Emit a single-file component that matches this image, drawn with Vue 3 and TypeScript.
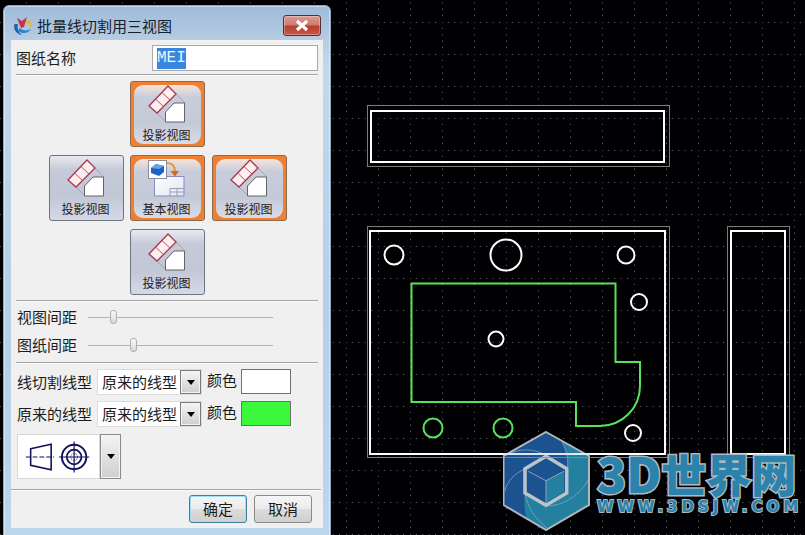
<script setup lang="ts">
interface ViewBtn { col: number; row: number; label: string; active: boolean; base?: boolean }
const buttons: ViewBtn[] = [
  { col: 2, row: 1, label: '投影视图', active: true },
  { col: 1, row: 2, label: '投影视图', active: false },
  { col: 2, row: 2, label: '基本视图', active: true, base: true },
  { col: 3, row: 2, label: '投影视图', active: true },
  { col: 2, row: 3, label: '投影视图', active: false },
]
const sliders = [
  { label: '视图间距', pos: 22 },
  { label: '图纸间距', pos: 42 },
]
const lineRows = [
  { label: '线切割线型', color: '#ffffff' },
  { label: '原来的线型', color: '#3cf83c' },
]
const whiteCircles = [
  [394, 255, 9.5], [506, 255, 15.5], [626, 255, 8.5], [639, 302, 8],
  [496, 339, 7.5], [633, 433, 8],
]
const greenCircles = [[433, 428, 9.5], [503, 428, 9.5]]
</script>

<template>
  <div class="desktop">
    <svg class="cad" width="805" height="535" viewBox="0 0 805 535">
      <defs>
        <pattern id="grid" x="26" y="22" width="32" height="32" patternUnits="userSpaceOnUse">
          <g fill="#5e646c">
            <circle v-for="i in 5" :key="'h' + i" :cx="(i - 1) * 6.4" cy="0.5" r="0.6" />
            <circle v-for="i in 5" :key="'v' + i" cx="0.5" :cy="(i - 1) * 6.4" r="0.6" />
          </g>
        </pattern>
      </defs>
      <rect width="805" height="535" fill="#010103" />
      <rect width="805" height="535" fill="url(#grid)" />
      <g fill="none" stroke="#7c7c7c" stroke-width="1">
        <rect x="367.5" y="105.5" width="302" height="61" />
        <rect x="367.5" y="226.5" width="302" height="231" />
        <rect x="727.5" y="226.5" width="62" height="231" />
      </g>
      <g fill="none" stroke="#fff" stroke-width="2">
        <rect x="371" y="111" width="293" height="51" />
        <rect x="370" y="231" width="295" height="223" />
        <rect x="731" y="231" width="54" height="223" />
        <circle v-for="(c, i) in whiteCircles" :key="i" :cx="c[0]" :cy="c[1]" :r="c[2]" />
      </g>
      <g fill="none" stroke="#58e25c" stroke-width="2">
        <path d="M411.5 283.5H615.5V362H640V386A40 40 0 0 1 600 426H576V402H411.5Z" />
        <circle v-for="(c, i) in greenCircles" :key="i" :cx="c[0]" :cy="c[1]" :r="c[2]" />
      </g>
    </svg>

    <div class="logo">
      <svg class="logo-mark" width="90" height="100" viewBox="0 0 90 100">
        <path d="M43 1 86 25V74L43 99 0.500 74V25Z" fill="#1c528f" />
        <path d="M58.700 10 86 25V74L43 99 24 88C21 80 21 70 22 62L43 74 64 62V38C66 28 63 18 58.700 10Z" fill="#23809f" />
        <g fill="none" stroke="#7fa6c0" stroke-width="0.800">
          <path d="M3.700 24C16 17 32 17 43.700 25" />
          <path d="M2 60C4 50 12 42 22 38" />
          <path d="M86 47C78 64 60 75 43.700 75" />
          <path d="M22 62C24 74 30 86 44 97" />
          <path d="M58.700 10C64 20 66 30 64 40" />
        </g>
        <path d="M43 1 86 25V74L43 99 0.500 74V25Z" fill="none" stroke="#b0b8be" stroke-width="2" />
        <path d="M43 25.300 63.700 37.700V62L43 74.300 22 62V37.700Z" fill="#1c528f" stroke="#bcc4ca" stroke-width="3.500" />
        <path d="M43 49.700V72L61 61V40.300Z" fill="#23809f" />
        <path d="M43 49.700 25.300 40.300M43 49.700V72M43 49.700 60.700 40.300" fill="none" stroke="#a8b8c4" stroke-width="0.800" />
        <path d="M0 23H87" stroke="#dfe8f2" stroke-width="2" />
        <path d="M0 26.500H87" stroke="#8a8f96" stroke-width="0.800" />
      </svg>
      <div class="logo-text">
        <div class="logo-title"><span class="logo-3d">3D</span>世界网</div>
        <div class="logo-url">WWW.3DSJW.COM</div>
      </div>
    </div>

    <section class="window">
      <header class="titlebar">
        <svg class="app-icon" width="20" height="20" viewBox="0 0 20 20">
          <path d="M1.500 8C0 13 3 18 9 19 5 16 4 12 5 8Z" fill="#1f62b0" />
          <path d="M5 15C9 18 15 18 18 13 14 15 10 15 6.500 12Z" fill="#2a86c8" />
          <path d="M4 2 9 5 14 1 11 11 8 12Z" fill="#c8324a" />
          <path d="M14 4C18 4 20 8 18 12 17 9 15 7 13 7Z" fill="#d8bc3a" />
        </svg>
        <span class="title-text">批量线切割用三视图</span>
        <button class="close">
          <svg width="16" height="13" viewBox="0 0 16 13">
            <path d="M3 2 13 11M13 2 3 11" stroke="#fff" stroke-width="3.200" fill="none" />
          </svg>
        </button>
      </header>

      <div class="client">
        <div class="name-row">
          <span class="label">图纸名称</span>
          <div class="name-input"><span class="selected">MEI</span></div>
        </div>
        <div class="sep"></div>

        <div class="view-grid">
          <button
            v-for="(b, i) in buttons"
            :key="i"
            class="view-btn"
            :class="{ active: b.active }"
            :style="{ gridColumn: b.col, gridRow: b.row }"
          >
            <svg class="view-icon" width="73" height="44" viewBox="1 1 73 44">
              <template v-if="b.base">
                <defs>
                  <linearGradient id="sheet" x1="0" y1="0" x2="1" y2="1">
                    <stop offset="0" stop-color="#fff" />
                    <stop offset="1" stop-color="#dfe5f4" />
                  </linearGradient>
                </defs>
                <path d="M24.500 21.500H54V41H24.500Z" fill="url(#sheet)" stroke="#7f8fc4" />
                <path d="M40 33.500H54M40 37H54M40 33.500V41M47 33.500V41" stroke="#9a9fb0" fill="none" />
                <path d="M37 8C42 8 45 11 45 17" stroke="#d8a040" stroke-width="2.200" fill="none" />
                <path d="M40.500 16H49L45 21.500Z" fill="#e0641a" />
                <rect x="18.500" y="5.500" width="18" height="18" fill="#fff" stroke="#8a8fa0" />
                <path d="M21 13 26 9 34 11V17L29 21 21 18Z" fill="#1f5fc8" />
                <path d="M26 9 34 11 29 14 21 13Z" fill="#62a6ee" />
              </template>
              <template v-else>
                <path d="M46 13 55 22M27 32 36 41" stroke="#a9a3ad" fill="none" />
                <path d="M19 25 38 5 46 13 27 32Z" fill="#fdeef0" stroke="#a8384e" stroke-width="1.300" />
                <path d="M25.500 18 33.500 25.500M32 11.500 40 19" stroke="#b85468" fill="none" />
                <path d="M35.500 41V31L44 22H54.500V41Z" fill="#fff" stroke="#62646a" />
              </template>
            </svg>
            <span class="view-label">{{ b.label }}</span>
          </button>
        </div>
        <div class="sep sep-views"></div>

        <div class="sliders">
          <div v-for="s in sliders" :key="s.label" class="slider-row">
            <span class="label slider-label">{{ s.label }}</span>
            <div class="track">
              <span class="thumb" :style="{ left: s.pos + 'px' }"></span>
            </div>
          </div>
        </div>
        <div class="sep sep-sliders"></div>

        <div class="line-rows">
          <div v-for="r in lineRows" :key="r.label" class="line-row">
            <span class="label line-label">{{ r.label }}</span>
            <div class="combo">
              <span class="combo-text">原来的线型</span>
              <span class="drop"><i class="tri"></i></span>
            </div>
            <span class="label color-label">颜色</span>
            <span class="swatch" :style="{ background: r.color }"></span>
          </div>
        </div>

        <div class="symbol-combo">
          <div class="symbol-box">
            <svg width="84" height="44" viewBox="0 0 84 44">
              <g fill="none" stroke="#10105c" stroke-width="1.600">
                <path d="M14 13.500 35 9V35L14 30.500Z" />
                <path d="M9 22H38" stroke-width="1.200" stroke-dasharray="5 2" />
                <circle cx="58.500" cy="22" r="12.500" stroke-width="2" />
                <circle cx="58.500" cy="22" r="7.500" stroke-width="1.800" />
                <circle cx="58.500" cy="22" r="3.500" stroke-width="0.800" stroke-dasharray="1.500 1" />
                <path d="M43 22H74M58.500 6V38" stroke-width="1.200" />
              </g>
            </svg>
          </div>
          <span class="drop drop-tall"><i class="tri"></i></span>
        </div>

        <div class="sep sep-footer"></div>
        <footer class="footer">
          <button class="act primary">确定</button>
          <button class="act">取消</button>
        </footer>
      </div>
    </section>
  </div>
</template>

<style scoped>
.desktop {
  position: relative;
  width: 805px;
  height: 535px;
  overflow: hidden;
  background: #010103;
  font-family: "Noto Sans CJK SC", "Liberation Sans", sans-serif;
}
.cad { position: absolute; left: 0; top: 0; display: block; }

.logo {
  position: absolute;
  left: 503px;
  top: 431px;
  display: flex;
  gap: 4px;
}
.logo-mark { display: block; flex: none; }
.logo-text { margin-top: 16px; width: 205px; }
.logo-title {
  color: #2b83ab;
  font-size: 45px;
  line-height: 50px;
  font-weight: 900;
  white-space: nowrap;
  -webkit-text-stroke: 3px #a9bac6;
  paint-order: stroke fill;
}
.logo-3d { font-size: 48px; }
.logo-url {
  margin-top: 1px;
  color: #2b83ab;
  font-family: "DejaVu Sans", sans-serif;
  font-size: 15px;
  line-height: 15px;
  font-weight: 700;
  letter-spacing: 4px;
  white-space: nowrap;
  -webkit-text-stroke: 2px #a9bac6;
  paint-order: stroke fill;
}

.window {
  position: absolute;
  left: 3px;
  top: 5px;
  width: 328px;
  height: 535px;
  box-sizing: border-box;
  border: 1px solid #8ea8c2;
  border-radius: 6px 6px 0 0;
  background: linear-gradient(180deg, #9fbbd9 0, #b3cae0 30px, #c2d8ea 60px, #b4cfe6 300px, #bcd6ec 100%);
  box-shadow: inset 0 0 0 1px rgba(255, 255, 255, 0.4);
}
.titlebar {
  display: flex;
  align-items: center;
  height: 34px;
  padding: 5px 9px 0 9px;
  box-sizing: border-box;
}
.app-icon { flex: none; }
.title-text {
  margin-left: 4px;
  font-size: 15px;
  line-height: 20px;
  color: #14202c;
}
.close {
  margin-left: auto;
  width: 38px;
  height: 21px;
  padding: 0;
  display: flex;
  align-items: center;
  justify-content: center;
  border: 1px solid #55302e;
  border-radius: 3px;
  background: linear-gradient(180deg, #dc9a90 0, #d07c70 45%, #b8402e 55%, #c8574a 100%);
  box-shadow: inset 0 0 0 1px rgba(255, 255, 255, 0.3);
}

.client {
  margin: 0 7px;
  height: 488px;
  padding: 5px 5px 0;
  box-sizing: border-box;
  background: #f0f0f0;
}
.label {
  font-size: 15px;
  line-height: 20px;
  color: #1c1c1c;
  white-space: nowrap;
}
.name-row {
  display: flex;
  align-items: center;
  justify-content: space-between;
  height: 26px;
}
.name-input {
  width: 166px;
  height: 26px;
  box-sizing: border-box;
  display: flex;
  align-items: center;
  padding-left: 4px;
  background: #fff;
  border: 1px solid #a9a9a9;
}
.selected {
  background: #3a86dc;
  color: #e8f4ff;
  font-family: "Liberation Mono", monospace;
  font-size: 16px;
  line-height: 21px;
}
.sep { height: 1px; background: #a6a6a6; margin-top: 3px; box-shadow: 0 1px 0 #fbfbfb; }

.view-grid {
  display: grid;
  grid-template-columns: 81px 82px 75px;
  grid-template-rows: repeat(3, 66px);
  row-gap: 8px;
  margin: 6px 0 0 33px;
}
.view-btn {
  position: relative;
  width: 75px;
  height: 66px;
  box-sizing: border-box;
  padding: 0;
  display: flex;
  flex-direction: column;
  align-items: center;
  border: 1px solid #70747f;
  border-radius: 3px;
  background: linear-gradient(180deg, #e8eaf0 0, #c6cad8 14px, #c2c7d6 40px, #d5d9e7 100%);
  font-family: inherit;
}
.view-btn.active {
  border-color: #8c6a50;
  background: #f08030;
}
.view-btn.active::before {
  content: "";
  position: absolute;
  inset: 3px 3px 2px;
  border-radius: 9px;
  background: linear-gradient(180deg, #f6e4da 0, #c9cddb 12px, #c4c9d8 38px, #d8dce9 100%);
}
.view-icon { display: block; flex: none; position: relative; }
.view-label {
  position: relative;
  margin: 1px 0 0 -2px;
  font-size: 12px;
  line-height: 16px;
  color: #222;
}

.sep-views { margin-top: 5px; }
.sliders { margin-top: 2px; }
.slider-row { display: flex; align-items: center; height: 28px; padding-left: 1px; }
.slider-label { width: 71px; flex: none; }
.track {
  position: relative;
  width: 185px;
  height: 1px;
  background: #b4b4b4;
}
.thumb {
  position: absolute;
  top: -7px;
  width: 7px;
  height: 14px;
  box-sizing: border-box;
  border: 1px solid #b0b0b0;
  border-radius: 3px;
  background: linear-gradient(180deg, #fafafa, #d6d6d6);
}
.sep-sliders { margin-top: 3px; }

.line-rows { margin-top: 6px; display: flex; flex-direction: column; gap: 6px; }
.line-row { display: flex; align-items: center; height: 26px; padding-left: 1px; }
.line-label { width: 80px; flex: none; }
.combo {
  width: 105px;
  height: 26px;
  box-sizing: border-box;
  display: flex;
  background: #fff;
  border: 1px solid #dcdcdc;
  flex: none;
}
.combo-text { flex: 1; padding-left: 4px; font-size: 15px; line-height: 24px; color: #1c1c1c; white-space: nowrap; }
.drop {
  width: 21px;
  flex: none;
  box-sizing: border-box;
  display: flex;
  align-items: center;
  justify-content: center;
  border: 1px solid #7c7c7c;
  background: linear-gradient(180deg, #f4f4f4, #cfcfcf);
  box-shadow: inset 0 0 0 1px #f4f4f4;
}
.tri {
  width: 0;
  height: 0;
  border-left: 4.5px solid transparent;
  border-right: 4.5px solid transparent;
  border-top: 5px solid #000;
}
.color-label { margin-left: 5px; width: 34px; flex: none; margin-top: -4px; }
.swatch {
  width: 50px;
  height: 25px;
  box-sizing: border-box;
  border: 1px solid #707070;
  flex: none;
  margin-top: -2px;
}

.symbol-combo { display: flex; height: 45px; width: 104px; margin: 7px 0 0 1px; }
.symbol-box {
  width: 83px;
  box-sizing: border-box;
  background: #fff;
  border: 1px solid #d8d8d8;
  display: flex;
  align-items: center;
}
.symbol-box svg { display: block; margin-left: -1px; }
.drop-tall { border-color: #8a8a8a; }

.sep-footer { margin: 10px -3px 0 -5px; }
.footer { display: flex; justify-content: flex-end; gap: 7px; margin-top: 5px; padding-right: 6px; }
.act {
  width: 58px;
  height: 28px;
  box-sizing: border-box;
  padding: 0;
  border: 1px solid #8a8a8a;
  border-radius: 3px;
  background: linear-gradient(180deg, #f6f6f6, #ebebeb 48%, #dcdcdc 52%, #cfcfcf);
  font-family: inherit;
  font-size: 15px;
  line-height: 20px;
  color: #1c1c1c;
}
.act.primary {
  border-color: #3c7fa0;
  box-shadow: inset 0 0 0 1px #9fe0f4;
}
</style>

<style>
html, body { margin: 0; background: #000; }
</style>
